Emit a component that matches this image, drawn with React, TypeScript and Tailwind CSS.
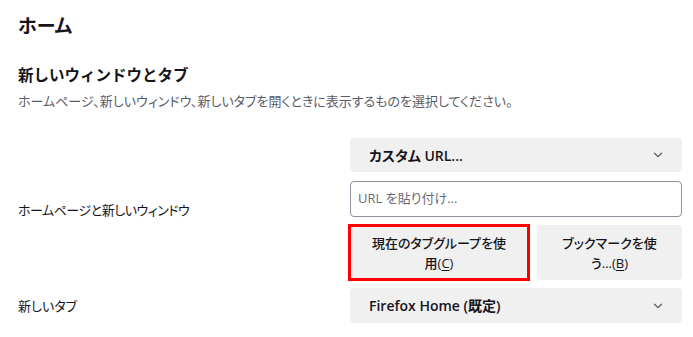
import React from "react";

function Chevron() {
  return (
    <svg width="10" height="6" viewBox="0 0 10 6" className="shrink-0">
      <path d="M1.5 1.2 L5 4.6 L8.5 1.2" fill="none" stroke="#5b5b66" strokeWidth="1.3" strokeLinecap="round" strokeLinejoin="round" />
    </svg>
  );
}

export default function App() {
  return (
    <div
      className="w-[693px] h-[337px] bg-white pl-[18px] pr-[11px] text-[#15141a] overflow-hidden [font-feature-settings:'palt']"
      style={{ fontFamily: "'Open Sans', 'Noto Sans CJK JP', sans-serif" }}
    >
      <h1 className="pt-[11px] text-[19px] font-bold leading-[30px]">ホーム</h1>
      <h2 className="mt-[23px] text-[15.5px] font-semibold leading-[22px] [font-feature-settings:normal]">新しいウィンドウとタブ</h2>
      <p className="mt-[5px] text-[13px] leading-[20px] text-[#5b5b66]">
        ホームページ、新しいウィンドウ、新しいタブを開くときに表示するものを選択してください。
      </p>

      <div className="mt-[27px] grid grid-cols-[332px_332px] justify-between gap-y-[7px]">
        <div className="flex items-center text-[13px] leading-[20px] tracking-[-0.5px]">ホームページと新しいウィンドウ</div>
        <div className="flex flex-col">
          <div className="h-[34px] rounded-[4px] bg-[#f0f0f0] flex items-center justify-between pl-[19px] pr-[19px]">
            <span className="text-[14px] font-semibold">カスタム URL...</span>
            <Chevron />
          </div>
          <div className="mt-[9px] h-[36px] rounded-[4px] border border-[#8f8f9d] flex items-center px-[7px]">
            <span className="text-[13px] text-[#6b6b76]">URL を貼り付け...</span>
          </div>
          <div className="mt-[7px] flex items-center gap-[7px]">
            <div className="ml-[-2px] w-[182px] h-[57px] border-[3px] border-[#ff0000] bg-[#f0f0f0] flex items-center justify-center text-center text-[13px] font-medium leading-[20px] px-[10px]">
              <span>
                現在のタブグループを使
                <br />
                用(<span className="underline underline-offset-2">C</span>)
              </span>
            </div>
            <div className="flex-1 h-[55px] rounded-[4px] bg-[#f0f0f0] flex items-center justify-center text-center text-[13px] font-medium leading-[20px] px-[10px]">
              <span>
                ブックマークを使
                <br />
                う...(<span className="underline underline-offset-2">B</span>)
              </span>
            </div>
          </div>
        </div>

        <div className="flex items-center text-[13px] leading-[20px]">新しいタブ</div>
        <div className="h-[35px] rounded-[4px] bg-[#f0f0f0] flex items-center justify-between pl-[19px] pr-[19px]">
          <span className="text-[14px] font-semibold">Firefox Home (既定)</span>
          <Chevron />
        </div>
      </div>
    </div>
  );
}
